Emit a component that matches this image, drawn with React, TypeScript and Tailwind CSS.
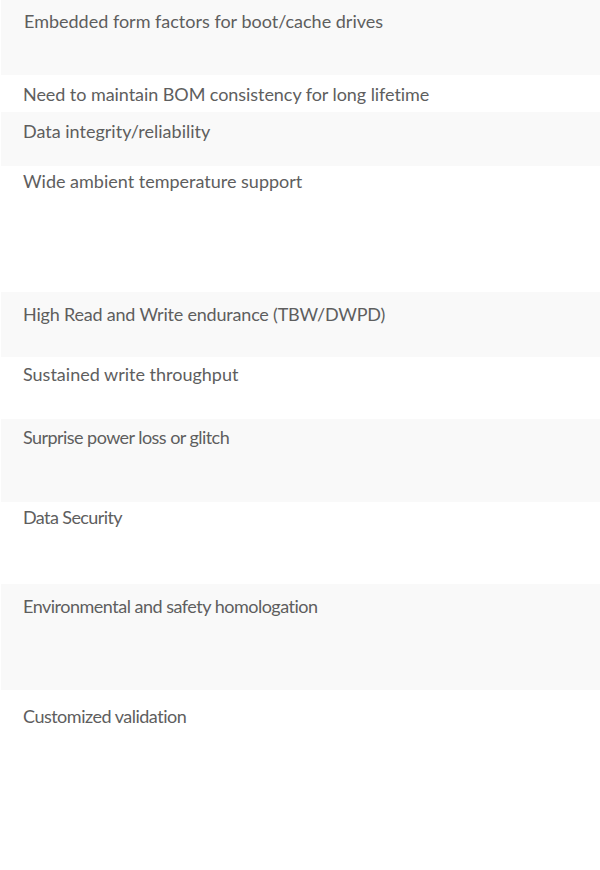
import React from "react";

const rows: { text: string; h: string; pt: string; grey: boolean; pl: string; tr: string }[] = [
  { text: "Embedded form factors for boot/cache drives", h: "h-[75px]", pt: "pt-[11px]", grey: true, pl: "pl-[23px]", tr: "" },
  { text: "Need to maintain BOM consistency for long lifetime", h: "h-[37px]", pt: "pt-[9px]", grey: false, pl: "pl-[22px]", tr: "tracking-[-0.06px]" },
  { text: "Data integrity/reliability", h: "h-[54px]", pt: "pt-[9px]", grey: true, pl: "pl-[22px]", tr: "" },
  { text: "Wide ambient temperature support", h: "h-[126px]", pt: "pt-[5px]", grey: false, pl: "pl-[22px]", tr: "" },
  { text: "High Read and Write endurance (TBW/DWPD)", h: "h-[65px]", pt: "pt-[12px]", grey: true, pl: "pl-[22px]", tr: "tracking-[-0.2px]" },
  { text: "Sustained write throughput", h: "h-[62px]", pt: "pt-[7px]", grey: false, pl: "pl-[22px]", tr: "" },
  { text: "Surprise power loss or glitch", h: "h-[83px]", pt: "pt-[8px]", grey: true, pl: "pl-[22px]", tr: "tracking-[-0.55px]" },
  { text: "Data Security", h: "h-[82px]", pt: "pt-[5px]", grey: false, pl: "pl-[22px]", tr: "tracking-[-0.6px]" },
  { text: "Environmental and safety homologation", h: "h-[106px]", pt: "pt-[12px]", grey: true, pl: "pl-[22px]", tr: "tracking-[-0.5px]" },
  { text: "Customized validation", h: "h-[180px]", pt: "pt-[16px]", grey: false, pl: "pl-[22px]", tr: "tracking-[-0.5px]" },
];

export default function App() {
  return (
    <div className="w-[600px] h-[870px] bg-white overflow-hidden" style={{ fontFamily: "Lato, 'Liberation Sans', sans-serif" }}>
      <div className="ml-px flex flex-col">
        {rows.map((r, i) => (
          <div
            key={i}
            className={`${r.h} ${r.pt} ${r.pl} ${r.grey ? "bg-[#f9f9f9]" : "bg-white"}`}
          >
            <p className={`text-[18px] leading-[20px] text-[#5e5e5e] ${r.tr}`}>{r.text}</p>
          </div>
        ))}
      </div>
    </div>
  );
}
